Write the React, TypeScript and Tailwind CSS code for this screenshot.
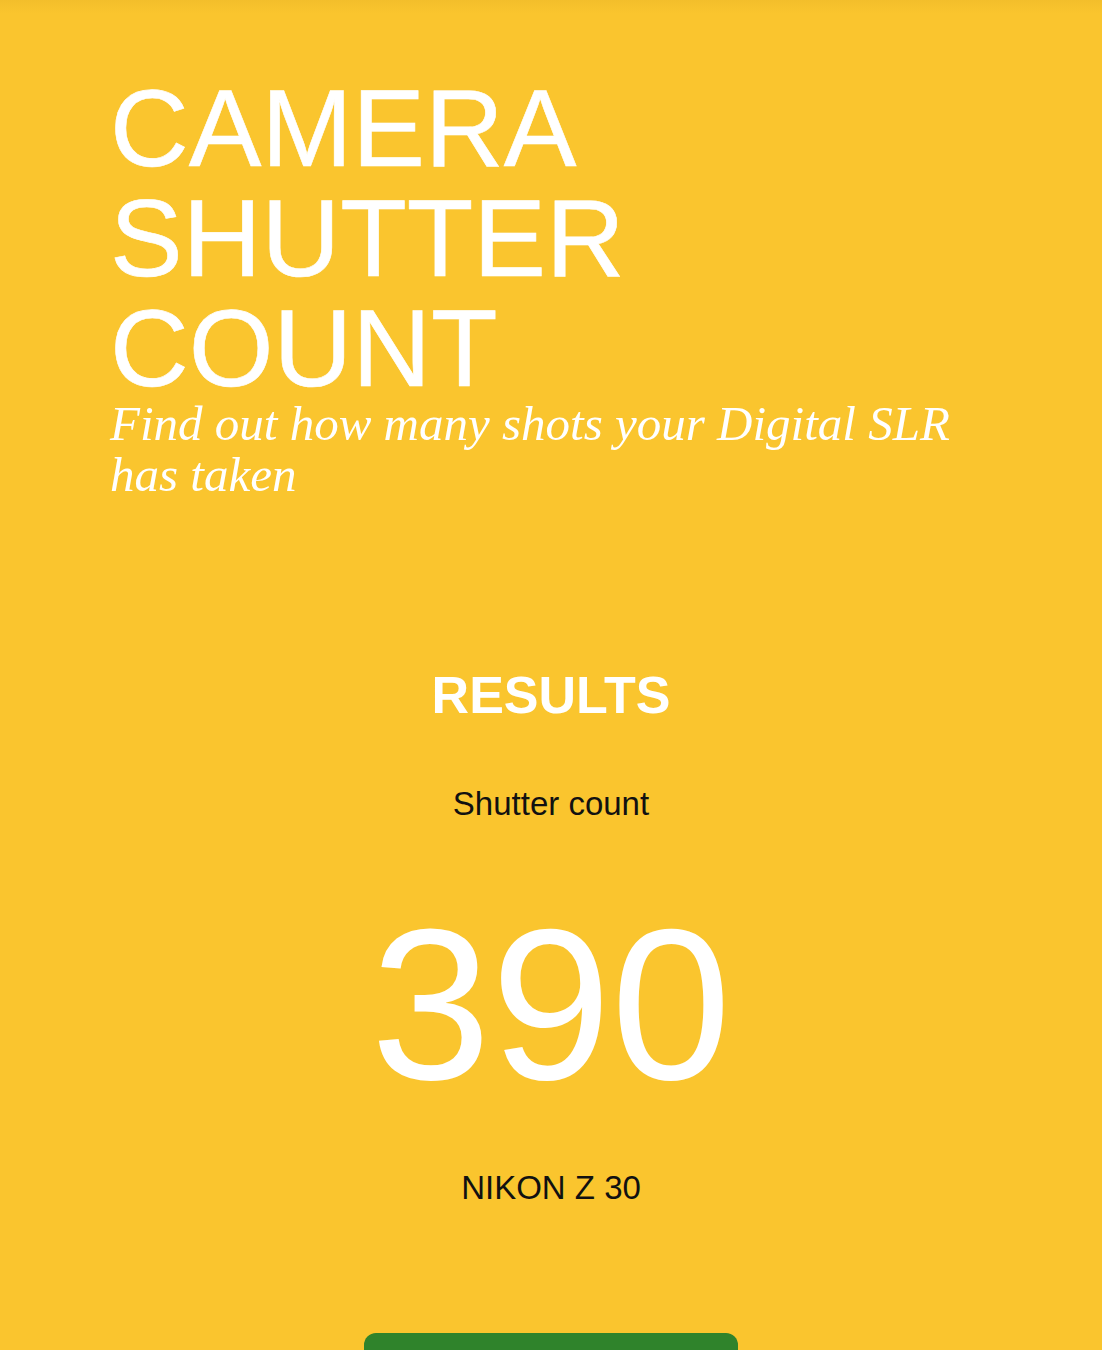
import React from "react";

export default function App() {
  const sans = { fontFamily: '"Liberation Sans", Arial, Helvetica, sans-serif' };
  return (
    <div className="relative min-h-[1350px] w-full overflow-hidden bg-[#fac52e]" style={sans}>
      <div className="absolute left-0 right-0 top-0 h-[14px] bg-gradient-to-b from-[#f3be2b] to-[#fac52e]" />
      <div className="relative flex flex-col">
        <header className="pl-[110px] pt-[73px]">
          <h1 className="text-[109px] leading-[110px] font-normal text-white [-webkit-text-stroke:0.6px_white]">
            CAMERA
            <br />
            SHUTTER
            <br />
            COUNT
          </h1>
          <p
            className="mt-[-5px] text-[49px] leading-[51px] italic text-white"
            style={{ fontFamily: '"Liberation Serif", "Times New Roman", serif' }}
          >
            Find out how many shots your Digital SLR
            <br />
            has taken
          </p>
        </header>
        <section className="mt-[165px] flex flex-col items-center">
          <h2 className="text-[52px] leading-[60px] font-bold text-white">RESULTS</h2>
          <div className="mt-[59px] text-[33px] leading-[40px] text-[#111]">Shutter count</div>
          <div className="mt-[70px] text-[216px] leading-[220px] text-white">390</div>
          <div className="mt-[54px] text-[33px] leading-[40px] text-[#111]">NIKON Z 30</div>
          <button className="mt-[125px] h-[64px] w-[374px] rounded-[12px] bg-[#2f832b]" />
        </section>
      </div>
    </div>
  );
}
